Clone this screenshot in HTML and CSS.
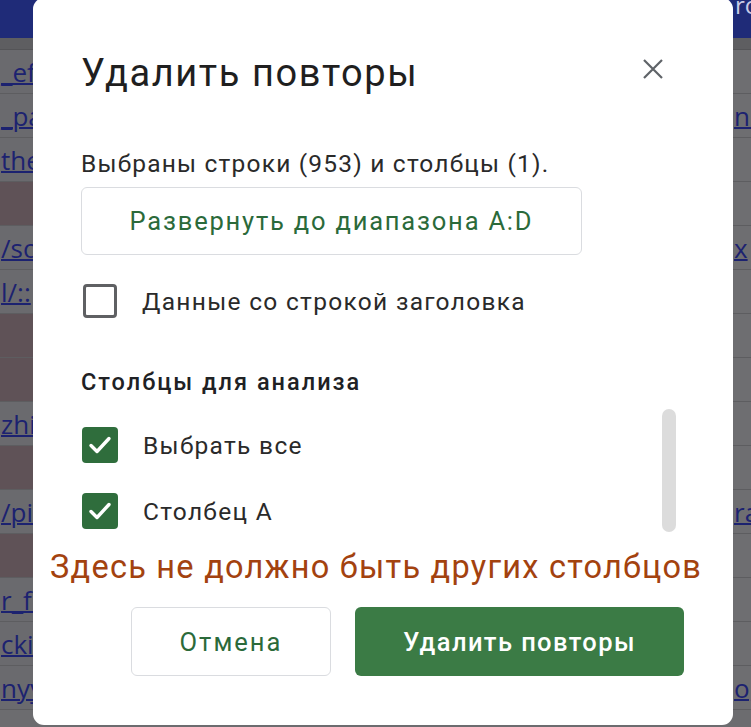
FILE: index.html
```html
<!DOCTYPE html>
<html lang="ru">
<head>
<meta charset="utf-8">
<title>Удалить повторы</title>
<link rel="stylesheet" href="styles.css">
</head>
<body>
<div class="sheet">
  <div class="sheet-header">
    <div class="hcell-left"></div>
    <div class="hcell-right"><span class="htext">ro</span></div>
  </div>
  <div class="sheet-strip"></div>
  <div class="row"><div class="cell-l"><span class="link">_eff</span></div><div class="cell-r"></div></div>
  <div class="row"><div class="cell-l"><span class="link">_pa</span></div><div class="cell-r"><span class="link">nn</span></div></div>
  <div class="row"><div class="cell-l"><span class="link">the</span></div><div class="cell-r"></div></div>
  <div class="row"><div class="cell-l mauve"></div><div class="cell-r"></div></div>
  <div class="row"><div class="cell-l"><span class="link">/so</span></div><div class="cell-r"><span class="link">x</span></div></div>
  <div class="row"><div class="cell-l"><span class="link">l/::</span></div><div class="cell-r"></div></div>
  <div class="row"><div class="cell-l mauve"></div><div class="cell-r"></div></div>
  <div class="row"><div class="cell-l mauve"></div><div class="cell-r"></div></div>
  <div class="row"><div class="cell-l"><span class="link">zhi</span></div><div class="cell-r"></div></div>
  <div class="row"><div class="cell-l mauve"></div><div class="cell-r"></div></div>
  <div class="row"><div class="cell-l"><span class="link">/pis</span></div><div class="cell-r"><span class="link">ra</span></div></div>
  <div class="row"><div class="cell-l mauve"></div><div class="cell-r"></div></div>
  <div class="row"><div class="cell-l"><span class="link">r_fi</span></div><div class="cell-r"></div></div>
  <div class="row"><div class="cell-l"><span class="link">cki/</span></div><div class="cell-r"></div></div>
  <div class="row"><div class="cell-l"><span class="link">nyy</span></div><div class="cell-r"><span class="link">o,</span></div></div>
</div>

<div class="dialog" role="dialog">
  <div class="dlg-head">
    <h1 class="dlg-title">Удалить повторы</h1>
    <button class="close-btn" aria-label="Закрыть">
      <svg width="22" height="22" viewBox="0 0 22 22"><path d="M2 2 L20 20 M20 2 L2 20" stroke="#5f6368" stroke-width="2.2" fill="none"/></svg>
    </button>
  </div>
  <p class="dlg-sub">Выбраны строки (953) и столбцы (1).</p>
  <button class="expand-btn">Развернуть до диапазона A:D</button>
  <label class="check-row header-row">
    <span class="box box-empty"></span>
    <span class="check-label">Данные со строкой заголовка</span>
  </label>
  <h2 class="section">Столбцы для анализа</h2>
  <div class="list">
    <div class="items">
      <label class="check-row">
        <span class="box box-on"><svg width="36" height="36" viewBox="0 0 36 36"><path d="M9 18.5 L15 24.5 L27 11.5" stroke="#fff" stroke-width="3.4" fill="none" stroke-linecap="round" stroke-linejoin="round"/></svg></span>
        <span class="check-label">Выбрать все</span>
      </label>
      <label class="check-row">
        <span class="box box-on"><svg width="36" height="36" viewBox="0 0 36 36"><path d="M9 18.5 L15 24.5 L27 11.5" stroke="#fff" stroke-width="3.4" fill="none" stroke-linecap="round" stroke-linejoin="round"/></svg></span>
        <span class="check-label">Столбец А</span>
      </label>
    </div>
    <div class="scrollbar"></div>
  </div>
  <p class="note">Здесь не должно быть других столбцов</p>
  <div class="actions">
    <button class="btn btn-cancel">Отмена</button>
    <button class="btn btn-primary">Удалить повторы</button>
  </div>
</div>
</body>
</html>
```

FILE: styles.css
```css
* { box-sizing: border-box; }
html, body { margin: 0; padding: 0; }
body {
  width: 751px;
  height: 727px;
  overflow: hidden;
  position: relative;
  background: #6c6c6f;
  font-family: Roboto, "Noto Sans", sans-serif;
}

/* background spreadsheet */
.sheet { width: 751px; }
.sheet-header {
  height: 38px;
  background: #1f2b78;
  display: flex;
}
.hcell-left { width: 733px; }
.hcell-right {
  flex: 1;
  overflow: hidden;
  white-space: nowrap;
  color: #c9cbe6;
  font-family: "Open Sans", sans-serif;
  font-size: 24px;
  line-height: 14px;
}
.htext { display: block; margin-top: -2px; padding-left: 2px; }
.sheet-strip {
  height: 12px;
  background: #5e5e61;
  border-bottom: 1px solid #545457;
}
.row {
  height: 44px;
  display: flex;
  border-bottom: 1px solid #5d5d60;
}
.cell-l {
  width: 733px;
  background: #6a6a6e;
  overflow: hidden;
  white-space: nowrap;
  display: flex;
  align-items: center;
}
.cell-l.mauve { background: #5f5257; }
.cell-r {
  flex: 1;
  background: #6e6e71;
  overflow: hidden;
  white-space: nowrap;
  display: flex;
  align-items: center;
}
.link {
  font-family: "Open Sans", sans-serif;
  font-size: 26px;
  color: #1c2270;
  text-decoration: underline;
  text-decoration-thickness: 2px;
  padding-left: 1px;
  line-height: 30px;
}

/* dialog */
.dialog {
  position: absolute;
  left: 33px;
  top: -2px;
  width: 700px;
  height: 727px;
  background: #fff;
  border-radius: 11px;
  padding: 0 49px 0 48px;
  color: #202124;
}
.dlg-head {
  margin-top: 51px;
  height: 48px;
  display: flex;
  align-items: center;
  justify-content: space-between;
}
.dlg-title {
  margin: 0;
  font-size: 38px;
  font-weight: 400;
  line-height: 48px;
  color: #1f1f1f;
  letter-spacing: 1.6px;
}
.close-btn {
  width: 44px;
  height: 44px;
  border: 0;
  background: none;
  padding: 0;
  margin-right: 9px;
  margin-top: -8px;
  display: flex;
  align-items: center;
  justify-content: center;
}
.dlg-sub {
  margin: 52px 0 0;
  font-size: 24.5px;
  line-height: 30px;
  color: #2a2a2a;
  letter-spacing: 1.2px;
}
.expand-btn {
  display: block;
  margin-top: 8px;
  width: 501px;
  height: 68px;
  border: 1px solid #dadce0;
  border-radius: 6px;
  background: #fff;
  font-family: Roboto, sans-serif;
  font-size: 25.5px;
  color: #2b6a3a;
  letter-spacing: 1.8px;
}
.check-row {
  display: flex;
  align-items: center;
  height: 36px;
}
.header-row { margin-top: 28px; }
.box {
  width: 36px;
  height: 36px;
  border-radius: 4px;
  flex: none;
  display: flex;
}
.box-empty {
  border: 3px solid #5f6063;
  width: 34px;
  height: 34px;
  margin-left: 2px;
}
.box-on { background: #2f6d3c; margin-left: 1px; }
.check-label {
  margin-left: 25px;
  font-size: 24.5px;
  color: #2a2a2a;
  letter-spacing: 1.3px;
}
.section {
  margin: 48px 0 0;
  font-size: 23.5px;
  font-weight: 500;
  line-height: 30px;
  color: #202124;
  letter-spacing: 2px;
}
.list {
  margin-top: 12px;
  height: 123px;
  display: flex;
}
.items {
  flex: 1;
  padding-top: 18px;
  display: flex;
  flex-direction: column;
  gap: 30px;
}
.scrollbar {
  width: 14px;
  height: 123px;
  border-radius: 7px;
  background: #dcdcdc;
  margin-right: 8px;
}
.note {
  margin: 16px 0 0 -31px;
  font-size: 32.5px;
  line-height: 38px;
  color: #a3420f;
  white-space: nowrap;
  letter-spacing: 1.25px;
}
.actions {
  margin-top: 21px;
  display: flex;
  justify-content: flex-end;
  gap: 24px;
}
.btn {
  height: 69px;
  border-radius: 6px;
  font-family: Roboto, sans-serif;
  font-size: 25.5px;
  font-weight: 500;
  letter-spacing: 1.4px;
}
.btn-cancel {
  width: 200px;
  border: 1px solid #dadce0;
  background: #fff;
  color: #2b6a3a;
  font-weight: 400;
  letter-spacing: 2px;
}
.btn-primary {
  width: 329px;
  border: 0;
  background: #3b7b45;
  color: #fff;
}
```
